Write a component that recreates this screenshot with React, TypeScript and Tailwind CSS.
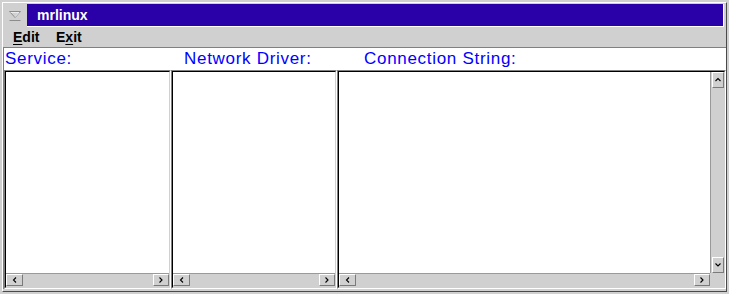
import React from 'react';

type Dir = 'left' | 'right' | 'up' | 'down';

const arrowPaths: Record<Dir, string> = {
  left: 'M4 0.5 L1.5 3 L4 5.5',
  right: 'M1.5 0.5 L4 3 L1.5 5.5',
  up: 'M0.5 4 L3 1.5 L5.5 4',
  down: 'M0.5 1.5 L3 4 L5.5 1.5',
};

function ArrowButton({ dir, className = '' }: { dir: Dir; className?: string }) {
  return (
    <div
      className={`flex shrink-0 items-center justify-center border border-white border-r-[#7a7a7a] border-b-[#7a7a7a] bg-[#d0d0d0] ${className}`}
    >
      <svg width="6" height="6" viewBox="0 0 6 6">
        <path d={arrowPaths[dir]} fill="none" stroke="#000" strokeWidth="1.1" />
      </svg>
    </div>
  );
}

function HScroll() {
  return (
    <div className="flex h-[14px] flex-1 items-start justify-between border-t border-[#9a9a9a] bg-[#d0d0d0]">
      <ArrowButton dir="left" className="h-[12px] w-[17px]" />
      <ArrowButton dir="right" className="h-[12px] w-[16px]" />
    </div>
  );
}

function VScroll() {
  return (
    <div className="flex w-[14px] flex-col justify-between border-l border-[#9a9a9a] bg-[#d0d0d0] pl-[1px]">
      <ArrowButton dir="up" className="h-[16px] w-[12px]" />
      <ArrowButton dir="down" className="h-[16px] w-[12px]" />
    </div>
  );
}

function ListPanel({ width, vscroll = false }: { width: string; vscroll?: boolean }) {
  return (
    <div className={`flex h-full flex-col border border-[#808080] border-r-white border-b-white ${width}`}>
      <div className="flex flex-1 flex-col border border-black border-r-[#d0d0d0] border-b-[#d0d0d0]">
        <div className="flex min-h-0 flex-1">
          <div className="flex-1 bg-white" />
          {vscroll && <VScroll />}
        </div>
        <div className="flex">
          <HScroll />
          {vscroll && <div className="h-[14px] w-[14px] bg-[#d0d0d0]" />}
        </div>
      </div>
    </div>
  );
}

function TitleIcon() {
  return (
    <svg width="14" height="13" viewBox="0 0 14 13">
      <path d="M1.5 2.5 H12.5 L7 8.5 Z" fill="none" stroke="#8c8c8c" strokeWidth="1" />
      <path d="M2.5 3.5 H11 L7 7.8" fill="none" stroke="#f2f2f2" strokeWidth="0.8" />
      <line x1="1.5" y1="11.5" x2="12.5" y2="11.5" stroke="#8c8c8c" strokeWidth="1" />
    </svg>
  );
}

export default function App() {
  return (
    <div className="h-[294px] w-[729px] overflow-hidden bg-[#d0d0d0] p-[2px] font-['Liberation_Sans',Arial,sans-serif]">
      <div className="flex h-full flex-col border border-white border-r-[#4a4a4a] border-b-[#4a4a4a]">
        {/* Title bar */}
        <div className="flex h-[24px] pt-[1px]">
          <div className="flex w-[24px] items-center justify-center pb-[1px]">
            <TitleIcon />
          </div>
          <div className="mr-[2px] flex flex-1 items-center border-r border-b border-white bg-[#2a00a8] pl-[10px]">
            <span className="text-[14px] leading-[22px] font-bold text-white">mrlinux</span>
          </div>
        </div>

        {/* Menu */}
        <div className="flex h-[20px] items-center pl-[10px] text-[14px] leading-[20px] font-bold text-black">
          <span className="w-[43px]">
            <span className="underline decoration-1 underline-offset-[2px]">E</span>dit
          </span>
          <span>
            E<span className="underline decoration-1 underline-offset-[2px]">x</span>it
          </span>
        </div>

        {/* Client area */}
        <div className="flex h-[242px] flex-col border-t border-l border-[#808080] bg-white">
          <div className="flex h-[22px] pl-[1px] text-[17px] leading-[22px] tracking-[0.7px] text-[#0000ff]">
            <span className="w-[179px]">Service:</span>
            <span className="w-[180px]">Network Driver:</span>
            <span>Connection String:</span>
          </div>
          <div className="flex h-[219px]">
            <ListPanel width="w-[167px]" />
            <ListPanel width="w-[166px]" />
            <ListPanel width="w-[389px]" vscroll />
          </div>
        </div>
      </div>
    </div>
  );
}
